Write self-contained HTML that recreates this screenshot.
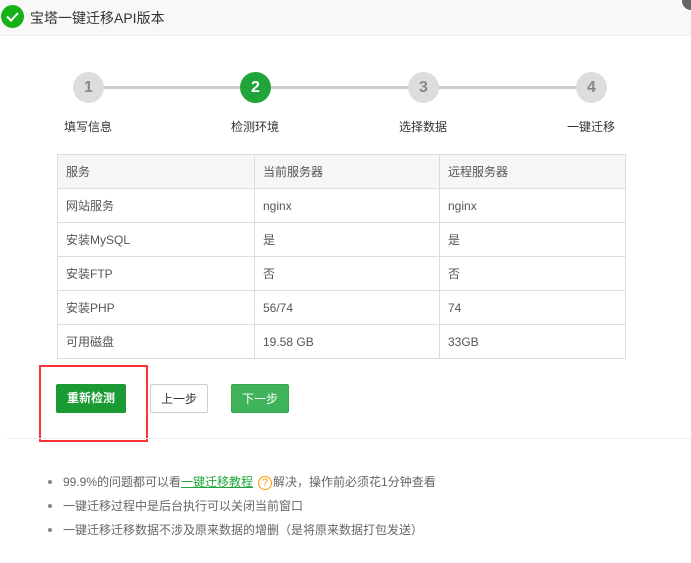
<!DOCTYPE html>
<html><head><meta charset="utf-8"><style>
*{margin:0;padding:0;box-sizing:border-box}
body{width:691px;height:563px;background:#fff;font-family:"Liberation Sans","Noto Sans CJK SC",sans-serif;font-size:12px;color:#555;position:relative;overflow:hidden}
.title{position:absolute;left:0;top:0;width:691px;height:36px;background:#f8f8f8;border-bottom:1px solid #eee}
.title span{position:absolute;left:30px;top:8px;font-size:14px;color:#333}
.chk{position:absolute;left:1px;top:5px}
.close{position:absolute;left:680px;top:-10px;width:22px;height:22px;border-radius:50%;background:#666;border:2px solid #fff}
.line{position:absolute;left:88px;top:86px;width:503px;height:3px;background:#ccc}
.c{position:absolute;top:72px;width:31px;height:31px;border-radius:50%;background:#ddd;color:#888;font-weight:bold;font-size:16px;text-align:center;line-height:31px}
.c.on{background:#20a53a;color:#fff}
.lb{position:absolute;top:118px;font-size:12px;color:#333}
table{position:absolute;left:57px;top:154px;width:569px;border-collapse:collapse}
td{border:1px solid #ddd;height:34px;padding:0 8px;color:#555;font-size:12px}
tr:first-child td{background:#f6f6f6}
.btn{position:absolute;top:384px;height:29px;border-radius:2px;font-size:12px;text-align:center;line-height:29px}
.red{position:absolute;left:39px;top:365px;width:109px;height:77px;border:2px solid #f33}
.sep{position:absolute;left:6px;top:438px;width:685px;height:1px;background:#eee}
ul{position:absolute;left:48px;top:474px;list-style:none}
li{height:24px;line-height:16px;color:#666;position:relative;padding-left:15px}
li:before{content:"";position:absolute;left:0;top:6px;width:4px;height:4px;border-radius:50%;background:#888}
a{color:#20a53a;text-decoration:underline}
.q{display:inline-block;width:14px;height:14px;border:1px solid #f90;border-radius:50%;color:#f90;font-size:11px;text-align:center;line-height:12px;margin:0 1px 0 5px}
</style></head><body>
<div class="title"><svg class="chk" width="23" height="23" viewBox="0 0 23 23"><circle cx="11.5" cy="11.5" r="11.5" fill="#18b218"/><path d="M6 11.5l4 4 7-7.5" stroke="#fff" stroke-width="2" fill="none"/></svg><span>宝塔一键迁移API版本</span><div class="close"></div></div>
<div class="line"></div>
<div class="c" style="left:73px">1</div>
<div class="c on" style="left:240px">2</div>
<div class="c" style="left:408px">3</div>
<div class="c" style="left:576px">4</div>
<div class="lb" style="left:64px">填写信息</div>
<div class="lb" style="left:231px">检测环境</div>
<div class="lb" style="left:399px">选择数据</div>
<div class="lb" style="left:567px">一键迁移</div>
<table>
<tr><td style="width:197px">服务</td><td style="width:185px">当前服务器</td><td>远程服务器</td></tr>
<tr><td>网站服务</td><td>nginx</td><td>nginx</td></tr>
<tr><td>安装MySQL</td><td>是</td><td>是</td></tr>
<tr><td>安装FTP</td><td>否</td><td>否</td></tr>
<tr><td>安装PHP</td><td>56/74</td><td>74</td></tr>
<tr><td>可用磁盘</td><td>19.58 GB</td><td>33GB</td></tr>
</table>
<div class="btn" style="left:56px;width:70px;background:#1a9a33;color:#fff;font-weight:bold">重新检测</div>
<div class="btn" style="left:150px;width:58px;border:1px solid #ccc;color:#333;background:#fff">上一步</div>
<div class="btn" style="left:231px;width:58px;background:#40b45a;border:1px solid #36a84f;color:#fff">下一步</div>
<div class="red"></div>
<div class="sep"></div>
<ul>
<li>99.9%的问题都可以看<a>一键迁移教程</a><span class="q">?</span>解决，操作前必须花1分钟查看</li>
<li>一键迁移过程中是后台执行可以关闭当前窗口</li>
<li>一键迁移迁移数据不涉及原来数据的增删（是将原来数据打包发送）</li>
</ul>
</body></html>
